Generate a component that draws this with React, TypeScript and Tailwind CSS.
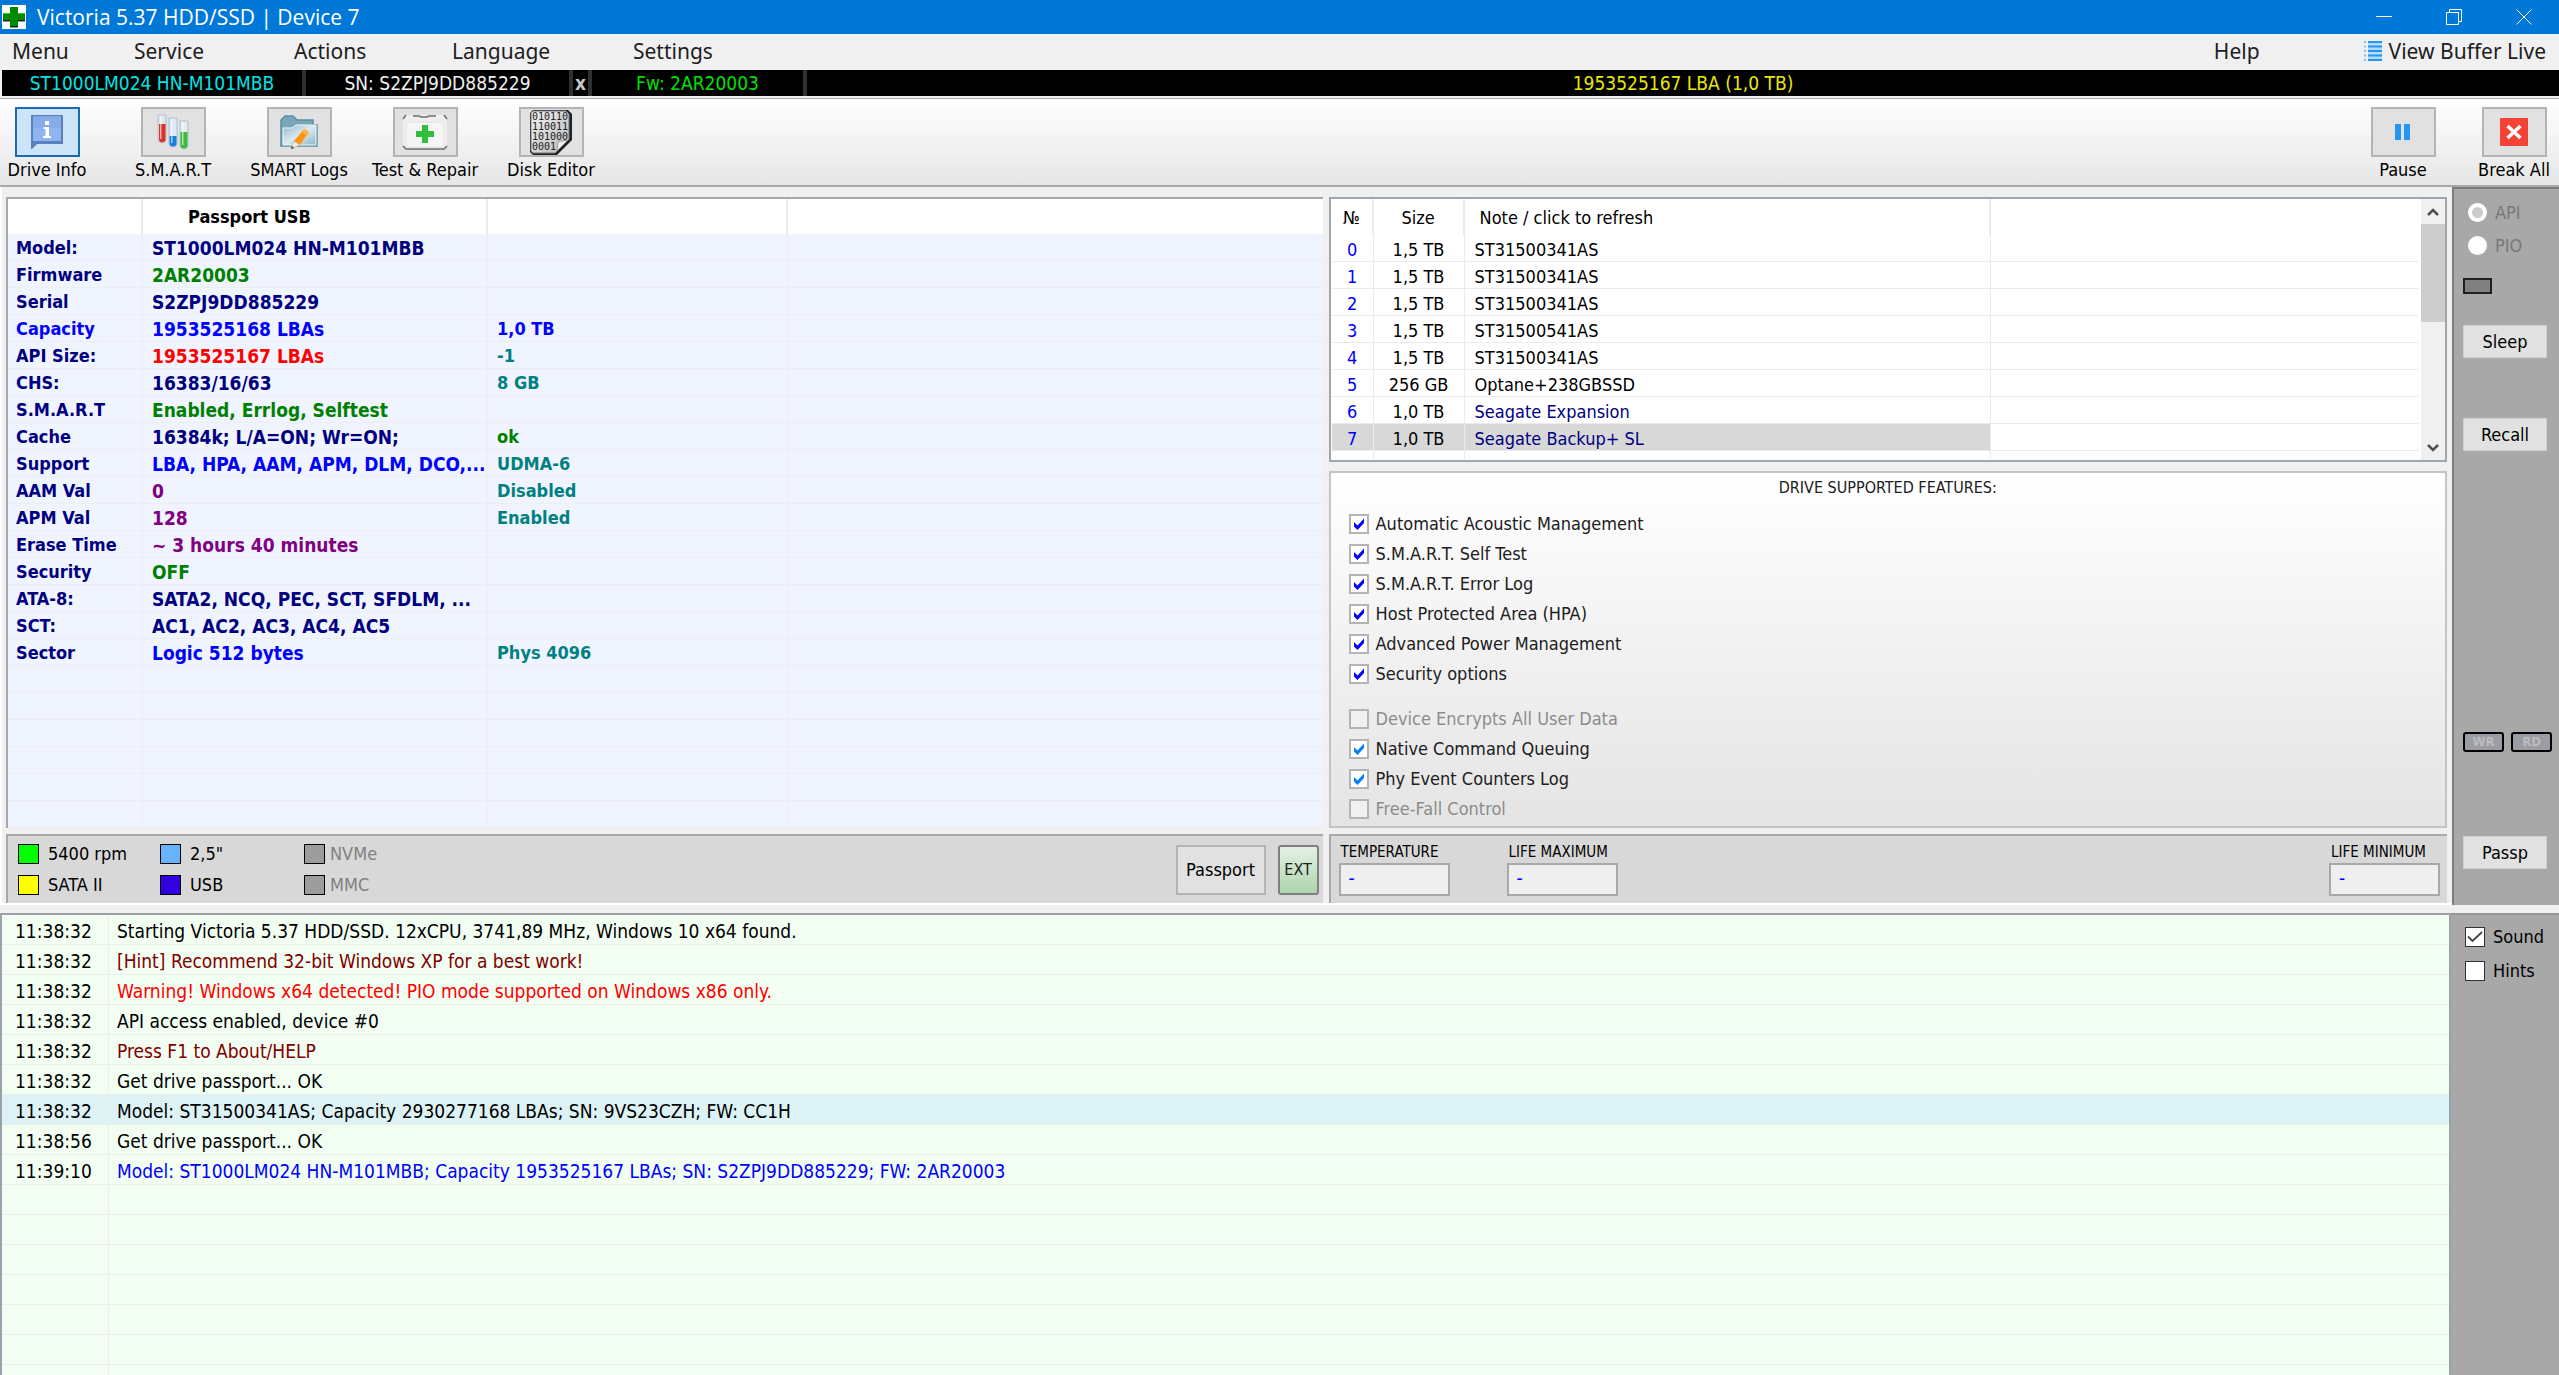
import { useState } from "react";
import type { ReactNode } from "react";

const passport = [
  ["Model:", "ST1000LM024 HN-M101MBB", "", "text-[#000080]", "text-[#000080]", ""],
  ["Firmware", "2AR20003", "", "text-[#000080]", "text-[#008000]", ""],
  ["Serial", "S2ZPJ9DD885229", "", "text-[#000080]", "text-[#000080]", ""],
  ["Capacity", "1953525168 LBAs", "1,0 TB", "text-[#0000ff]", "text-[#0000ff]", "text-[#0000ff]"],
  ["API Size:", "1953525167 LBAs", "-1", "text-[#000080]", "text-[#ff0000]", "text-[#008080]"],
  ["CHS:", "16383/16/63", "8 GB", "text-[#000080]", "text-[#000080]", "text-[#008080]"],
  ["S.M.A.R.T", "Enabled, Errlog, Selftest", "", "text-[#000080]", "text-[#008000]", ""],
  ["Cache", "16384k; L/A=ON; Wr=ON;", "ok", "text-[#000080]", "text-[#000080]", "text-[#008000]"],
  ["Support", "LBA, HPA, AAM, APM, DLM, DCO,...", "UDMA-6", "text-[#000080]", "text-[#0000ff]", "text-[#008080]"],
  ["AAM Val", "0", "Disabled", "text-[#000080]", "text-[#800080]", "text-[#008080]"],
  ["APM Val", "128", "Enabled", "text-[#000080]", "text-[#800080]", "text-[#008080]"],
  ["Erase Time", "~ 3 hours 40 minutes", "", "text-[#000080]", "text-[#800080]", ""],
  ["Security", "OFF", "", "text-[#000080]", "text-[#008000]", ""],
  ["ATA-8:", "SATA2, NCQ, PEC, SCT, SFDLM, ...", "", "text-[#000080]", "text-[#000080]", ""],
  ["SCT:", "AC1, AC2, AC3, AC4, AC5", "", "text-[#000080]", "text-[#000080]", ""],
  ["Sector", "Logic 512 bytes", "Phys 4096", "text-[#000080]", "text-[#0000ff]", "text-[#008080]"],
  ["", "", "", "", "", ""],
  ["", "", "", "", "", ""],
  ["", "", "", "", "", ""],
  ["", "", "", "", "", ""],
  ["", "", "", "", "", ""],
  ["", "", "", "", "", ""],
];

const drives = [
  { size: "1,5 TB", note: "ST31500341AS", color: "text-black" },
  { size: "1,5 TB", note: "ST31500341AS", color: "text-black" },
  { size: "1,5 TB", note: "ST31500341AS", color: "text-black" },
  { size: "1,5 TB", note: "ST31500541AS", color: "text-black" },
  { size: "1,5 TB", note: "ST31500341AS", color: "text-black" },
  { size: "256 GB", note: "Optane+238GBSSD", color: "text-black" },
  { size: "1,0 TB", note: "Seagate Expansion", color: "text-[#000080]" },
  { size: "1,0 TB", note: "Seagate Backup+ SL", color: "text-[#000080]" },
];

const features = [
  { label: "Automatic Acoustic Management", on: true, tick: "text-[#0000ff]" },
  { label: "S.M.A.R.T. Self Test", on: true, tick: "text-[#0000ff]" },
  { label: "S.M.A.R.T. Error Log", on: true, tick: "text-[#0000ff]" },
  { label: "Host Protected Area (HPA)", on: true, tick: "text-[#0000ff]" },
  { label: "Advanced Power Management", on: true, tick: "text-[#0000ff]" },
  { label: "Security options", on: true, tick: "text-[#0000ff]" },
];

const extraFeatures = [
  { label: "Device Encrypts All User Data", on: false, tick: "" },
  { label: "Native Command Queuing", on: true, tick: "text-[#0080ff]" },
  { label: "Phy Event Counters Log", on: true, tick: "text-[#0080ff]" },
  { label: "Free-Fall Control", on: false, tick: "" },
];

const log = [
  { time: "11:38:32", text: "Starting Victoria 5.37 HDD/SSD. 12xCPU, 3741,89 MHz, Windows 10 x64 found.", color: "text-black" },
  { time: "11:38:32", text: "[Hint] Recommend 32-bit Windows XP for a best work!", color: "text-[#800000]" },
  { time: "11:38:32", text: "Warning! Windows x64 detected! PIO mode supported on Windows x86 only.", color: "text-[#ff0000]" },
  { time: "11:38:32", text: "API access enabled, device #0", color: "text-black" },
  { time: "11:38:32", text: "Press F1 to About/HELP", color: "text-[#800000]" },
  { time: "11:38:32", text: "Get drive passport... OK", color: "text-black" },
  { time: "11:38:32", text: "Model: ST31500341AS; Capacity 2930277168 LBAs; SN: 9VS23CZH; FW: CC1H", color: "text-black" },
  { time: "11:38:56", text: "Get drive passport... OK", color: "text-black" },
  { time: "11:39:10", text: "Model: ST1000LM024 HN-M101MBB; Capacity 1953525167 LBAs; SN: S2ZPJ9DD885229; FW: 2AR20003", color: "text-[#0000ff]" },
  { time: "", text: "", color: "" },
  { time: "", text: "", color: "" },
  { time: "", text: "", color: "" },
  { time: "", text: "", color: "" },
  { time: "", text: "", color: "" },
  { time: "", text: "", color: "" },
  { time: "", text: "", color: "" },
];

const legend = [
  { label: "5400 rpm", box: "bg-[#00ff00]", text: "ml-[9px] text-black" },
  { label: '2,5"', box: "bg-[#66b3ff]", text: "ml-[9px] text-black" },
  { label: "NVMe", box: "bg-[#9c9c9c]", text: "ml-[5px] text-[#808080]" },
  { label: "SATA II", box: "bg-[#ffff00]", text: "ml-[9px] text-black" },
  { label: "USB", box: "bg-[#3300e0]", text: "ml-[9px] text-black" },
  { label: "MMC", box: "bg-[#9c9c9c]", text: "ml-[5px] text-[#808080]" },
];

function InfoIcon() {
  return (
    <svg width="34" height="36" viewBox="0 0 34 36">
      <path d="M1 1H33V30H7L2 35H1Z" fill="#5b80c0" />
      <path d="M3 2.5H31V27H3Z" fill="#8fb4ee" />
      <path d="M3 2.5H31V14H3Z" fill="#86acea" />
      <path d="M15 7H19V11H15ZM13.500 13H19V22H21V24H13V22H15.500V15H13.500Z" fill="#fff" />
    </svg>
  );
}

function TubesIcon() {
  return (
    <svg width="34" height="38" viewBox="0 0 34 38">
      <path d="M2 2H10V26A4 4 0 0 1 2 26Z" fill="#dde5ee" stroke="#b4bdcc" />
      <path d="M3 11H9.500V26A3 3 0 0 1 3 26Z" fill="#dc2f28" />
      <path d="M4 3H5.500V26H4Z" fill="#fff" opacity=".6" />
      <path d="M13 5H21V30A4 4 0 0 1 13 30Z" fill="#dde9f7" stroke="#a9bfdc" />
      <path d="M13.500 23H20.500V30A3.500 3.500 0 0 1 13.500 30Z" fill="#1b7fdc" />
      <path d="M15 6H16.500V30H15Z" fill="#fff" opacity=".6" />
      <path d="M24 8H32V32A4 4 0 0 1 24 32Z" fill="#e2ebee" stroke="#b0bfca" />
      <path d="M24.500 19H31.500V32A3.500 3.500 0 0 1 24.500 32Z" fill="#3bbb3b" />
      <path d="M26 9H27.500V32H26Z" fill="#fff" opacity=".6" />
    </svg>
  );
}

function FolderIcon() {
  return (
    <svg width="40" height="38" viewBox="0 0 40 38">
      <defs>
        <linearGradient id="folder" x1="0" y1="0" x2="1" y2="1">
          <stop offset="0" stopColor="#8fb9c6" />
          <stop offset="0.500" stopColor="#dcebef" />
          <stop offset="1" stopColor="#8ab4c2" />
        </linearGradient>
      </defs>
      <path d="M2 33V7L6 3H14L18 7H34V12H38V33Z" fill="#79a7b7" stroke="#5a8fa3" strokeWidth="1.500" />
      <path d="M4 32V15H13L17 12H37V32Z" fill="url(#folder)" stroke="#f0f8fa" />
      <path d="M24 17L29 20L21 32L15 28Z" fill="#ff9412" />
      <path d="M23 19L25 16Q29 16 30 20L28 23Z" fill="#ffb14d" />
      <path d="M15 28L21 32L12 36Z" fill="#f6ead8" stroke="#a89a86" strokeWidth=".5" />
      <path d="M12 36L13 33L15 35Z" fill="#444" />
    </svg>
  );
}

function RepairIcon() {
  return (
    <svg width="46" height="38" viewBox="0 0 46 38">
      <rect x="1" y="2" width="44" height="34" rx="4" fill="#efefef" />
      <rect x="4" y="9" width="38" height="25" rx="3" fill="#f5f5f5" stroke="#e2e2e2" />
      <path
        d="M1 6L4 2M45 6L42 2M11 3H17L19 4H25L27 3H34M1 33L4 36H42L45 33"
        fill="none"
        stroke="#6d6d6d"
        strokeWidth="1.500"
      />
      <path d="M20 12H26V18H32V24H26V30H20V24H14V18H20Z" fill="#2fbf3c" />
    </svg>
  );
}

function BinaryIcon() {
  return (
    <svg width="46" height="47" viewBox="0 0 46 47">
      <defs>
        <linearGradient id="paper" x1="0" y1="0" x2="1" y2="1">
          <stop offset="0" stopColor="#f2f2f2" />
          <stop offset="1" stopColor="#b8b8b8" />
        </linearGradient>
      </defs>
      <path d="M5 1H40L44 5V31L29 46H5L2 43V4Z" fill="#222" />
      <path d="M5 2H38L41 5V30L27 44H5L3 42V4Z" fill="url(#paper)" stroke="#6f7984" />
      <path d="M27 44C31 40 29 36 30 33C33 31 38 33 41 30Z" fill="#eee" stroke="#999" />
      <g fontFamily="'DejaVu Sans Mono', monospace" fontSize="10" fill="#222">
        <text x="4" y="11">010110</text>
        <text x="4" y="21">110011</text>
        <text x="4" y="31">101000</text>
        <text x="4" y="41">0001</text>
      </g>
    </svg>
  );
}

function PauseIcon() {
  return (
    <svg width="16" height="16" viewBox="0 0 16 16">
      <path d="M0 0H6V16H0ZM9 0H15V16H9Z" fill="#2196f3" />
    </svg>
  );
}

function BreakIcon() {
  return (
    <svg width="28" height="28" viewBox="0 0 28 28">
      <rect width="28" height="28" fill="#f44336" />
      <path d="M7.500 8L20.500 20M20.500 8L7.500 20" stroke="#fff" strokeWidth="3.500" />
    </svg>
  );
}

const tools = [
  { label: "Drive Info", icon: <InfoIcon />, style: "border-[#1a6ab0] bg-[#cce4f7]" },
  { label: "S.M.A.R.T", icon: <TubesIcon />, style: "border-[#b4b4b4] bg-[#e1e1e1]" },
  { label: "SMART Logs", icon: <FolderIcon />, style: "border-[#b4b4b4] bg-[#e1e1e1]" },
  { label: "Test & Repair", icon: <RepairIcon />, style: "border-[#b4b4b4] bg-[#e1e1e1]" },
  { label: "Disk Editor", icon: <BinaryIcon />, style: "border-[#b4b4b4] bg-[#e1e1e1]" },
];

function Feature({ label, on, tick }: { label: string; on: boolean; tick: string }) {
  const [checked, setChecked] = useState(on);
  return (
    <label className={`flex h-[30px] items-center gap-[7px] ${on ? "text-[#202020]" : "text-[#8c8c8c]"}`}>
      <span className="relative flex">
        <input
          type="checkbox"
          checked={checked}
          disabled={!on}
          onChange={() => setChecked(!checked)}
          className="h-5 w-5 appearance-none border-2 border-[#b4b4b4] bg-white disabled:bg-[#f0f0f0]"
        />
        {checked && (
          <svg className={`pointer-events-none absolute inset-0 ${tick}`} width="20" height="20" viewBox="0 0 20 20">
            <path d="M5 8L8.500 11.500L15 4.500V9L8.500 16L5 12.500Z" fill="currentColor" />
          </svg>
        )}
      </span>
      {label}
    </label>
  );
}

function Option({ label, on }: { label: string; on: boolean }) {
  const [checked, setChecked] = useState(on);
  return (
    <label className="flex h-[34px] items-center gap-2">
      <span className="relative flex">
        <input
          type="checkbox"
          checked={checked}
          onChange={() => setChecked(!checked)}
          className="h-5 w-5 appearance-none border border-[#333] bg-white"
        />
        {checked && (
          <svg className="pointer-events-none absolute inset-0" width="20" height="20" viewBox="0 0 20 20">
            <path d="M3 9.500L7.500 14L17 5" fill="none" stroke="#444" strokeWidth="1.800" />
          </svg>
        )}
      </span>
      {label}
    </label>
  );
}

function Temperature({ label }: { label: string }) {
  return (
    <label className="flex w-[111px] flex-col text-[15px] leading-[18px] whitespace-nowrap">
      <span className="pl-[2px]">{label}</span>
      <input
        type="text"
        readOnly
        value="-"
        className="mt-[2px] h-[33px] w-full border-2 border-[#a8a8a8] bg-[#efefef] px-2 pb-1 text-[19px] text-[#0000ff] outline-none"
      />
    </label>
  );
}

function SideButton({ children, className }: { children: ReactNode; className: string }) {
  return (
    <button className={`h-[33px] w-[84px] border border-[#d0d0d0] bg-[#e1e1e1] leading-[30px] ${className}`}>
      {children}
    </button>
  );
}

export default function App() {
  const [selected, setSelected] = useState(7);

  return (
    <div className="flex h-screen flex-col overflow-hidden bg-[#f0f0f0] font-['DejaVu_Sans_Condensed','Noto_Sans',sans-serif] text-[18px] leading-[22px] text-black">
      {/* title bar */}
      <header className="flex h-[34px] shrink-0 items-center bg-[#0078d7] pl-[2px] font-['Open_Sans','Noto_Sans',sans-serif] text-white">
        <svg width="24" height="24" viewBox="0 0 24 24">
          <rect width="24" height="24" fill="#fff" />
          <path d="M8 2H16V8H23V16H16V22H8V16H1V8H8Z" fill="#008a00" />
          <path d="M8 21H16V22.500H8ZM16 15H23V16.500H16ZM1 15H8V16.500H1Z" fill="#222" />
          <path d="M1 8H8V9H1ZM16 8H23V9H16Z" fill="#1fd01f" />
        </svg>
        <h1 className="ml-[11px] flex-1 text-[21px]">Victoria 5.37 HDD/SSD | Device 7</h1>
        <button aria-label="Minimize" className="flex h-full w-[70px] items-center justify-center">
          <svg width="16" height="16" viewBox="0 0 16 16" stroke="#fff">
            <path d="M0 7.500H16" />
          </svg>
        </button>
        <button aria-label="Restore" className="flex h-full w-[70px] items-center justify-center">
          <svg width="16" height="16" viewBox="0 0 16 16" fill="none" stroke="#fff">
            <path d="M.5 3.500H12.500V15.500H.5ZM3.500 3.500V.5H15.500V12.500H12.500" />
          </svg>
        </button>
        <button aria-label="Close" className="flex h-full w-[70px] items-center justify-center">
          <svg width="16" height="16" viewBox="0 0 16 16" stroke="#fff">
            <path d="M.5 .5L15.500 15.500M15.500 .5L.5 15.500" />
          </svg>
        </button>
      </header>

      {/* menu */}
      <nav className="flex h-9 shrink-0 items-center pr-[13px] pb-[3px] pl-3 font-['Noto_Sans',sans-serif] text-[21px] text-[#202020]">
        <button className="w-[122px] text-left">Menu</button>
        <button className="w-[160px] text-left">Service</button>
        <button className="w-[158px] text-left">Actions</button>
        <button className="w-[181px] text-left">Language</button>
        <button className="text-left">Settings</button>
        <button className="mr-[104px] ml-auto">Help</button>
        <button className="flex items-center gap-[7px]">
          <svg width="18" height="20" viewBox="0 0 18 20">
            <path d="M0 0H2V2H0ZM0 4.500H2V6.500H0ZM0 9H2V11H0ZM0 13.500H2V15.500H0ZM0 18H2V20H0Z" fill="#7cc0f8" />
            <path d="M4 0H18V20H4Z" fill="#b5dcfa" />
            <path d="M4 0H18V2H4ZM4 4.500H18V6.500H4ZM4 9H18V11H4ZM4 13.500H18V15.500H4ZM4 18H18V20H4Z" fill="#2196f3" />
          </svg>
          View Buffer Live
        </button>
      </nav>

      {/* current drive */}
      <div className="ml-[2px] flex h-[26px] shrink-0 items-center bg-black text-center text-[19px]">
        <div className="h-full w-[304px] border-r-4 border-[#303030] leading-[26px] text-[#00e5e5]">
          ST1000LM024 HN-M101MBB
        </div>
        <div className="h-full w-[267px] border-r-4 border-[#303030] leading-[26px] text-[#f0f0f0]">SN: S2ZPJ9DD885229</div>
        <button className="h-full w-[19px] border-r-4 border-[#303030] leading-[24px] font-bold text-[#c8c8c8]">x</button>
        <div className="h-full w-[215px] border-r-4 border-[#303030] leading-[26px] text-[#00e000]">Fw: 2AR20003</div>
        <div className="flex-1 leading-[26px] text-[#e8e800]">1953525167 LBA (1,0 TB)</div>
      </div>

      {/* toolbar */}
      <div className="mt-[2px] flex h-[89px] shrink-0 justify-between border-t border-b-2 border-[#a8a8a8] bg-linear-to-b from-white to-[#e6e6e6] pt-2">
        <div className="flex gap-8">
          {tools.map((tool) => (
            <button key={tool.label} className="flex w-[94px] flex-col items-center whitespace-nowrap">
              <span className={`flex h-[50px] w-[65px] items-center justify-center overflow-hidden border-2 ${tool.style}`}>
                {tool.icon}
              </span>
              <span className="mt-[2px]">{tool.label}</span>
            </button>
          ))}
        </div>
        <div className="flex gap-[31px] pr-[5px]">
          <button className="flex w-20 flex-col items-center">
            <span className="flex h-[50px] w-[65px] items-center justify-center border-2 border-[#b4b4b4] bg-[#e1e1e1]">
              <PauseIcon />
            </span>
            <span className="mt-[2px]">Pause</span>
          </button>
          <button className="flex w-20 flex-col items-center whitespace-nowrap">
            <span className="flex h-[50px] w-[65px] items-center justify-center border-2 border-[#b4b4b4] bg-[#e1e1e1]">
              <BreakIcon />
            </span>
            <span className="mt-[2px]">Break All</span>
          </button>
        </div>
      </div>

      <div className="flex shrink-0">
        <main className="flex flex-1 gap-[6px] border-b-2 border-l-2 border-white pt-[10px] pr-[5px] pl-1">
          {/* passport */}
          <section className="flex min-w-0 flex-[1316] flex-col">
            <table className="w-full table-fixed border-separate border-spacing-0 border-t-2 border-l-2 border-[#a8a8a8] bg-[#f0f4ff] text-left font-bold">
              <colgroup>
                <col className="w-[135px]" />
                <col className="w-[345px]" />
                <col className="w-[300px]" />
                <col />
              </colgroup>
              <thead>
                <tr className="h-[35px] bg-white">
                  <th className="border-r-2 border-[#ebebeb] p-0" />
                  <th className="border-r-2 border-[#ebebeb] p-0 pl-[45px] font-bold">Passport USB</th>
                  <th className="border-r-2 border-[#ebebeb] p-0" />
                  <th className="p-0" />
                </tr>
              </thead>
              <tbody>
                {passport.map((row, i) => (
                  <tr key={i} className="h-[27px] whitespace-nowrap">
                    <td className={`border-r border-b border-[#eceff2] p-0 pt-[2px] pl-2 ${row[3]}`}>{row[0]}</td>
                    <td className={`border-r border-b border-[#eceff2] p-0 pt-[2px] pl-[9px] text-[19px] ${row[4]}`}>{row[1]}</td>
                    <td className={`border-r border-b border-[#eceff2] p-0 pt-[2px] pl-[9px] ${row[5]}`}>{row[2]}</td>
                    <td className="border-b border-[#eceff2] p-0" />
                  </tr>
                ))}
              </tbody>
            </table>
            <div className="mt-[6px] flex h-[69px] items-center border-t-2 border-l-2 border-[#a8a8a8] bg-[#d8d8d8] pr-1">
              <ul className="grid flex-1 grid-cols-[142px_144px_140px] gap-y-[9px] pl-[10px]">
                {legend.map((item) => (
                  <li key={item.label} className="flex items-center">
                    <span className={`h-5 w-[21px] border border-black ${item.box}`} />
                    <span className={item.text}>{item.label}</span>
                  </li>
                ))}
              </ul>
              <button className="h-[50px] w-[90px] border-2 border-[#b4b4b4] bg-[#e1e1e1]">Passport</button>
              <button className="ml-3 h-[50px] w-[41px] rounded-[3px] border-2 border-[#808080] bg-linear-to-b from-[#e4f0e4] to-[#aed4ae] text-[16px] text-[#202020]">
                EXT
              </button>
            </div>
          </section>

          <section className="flex min-w-0 flex-[1118] flex-col">
            {/* drive list */}
            <div className="flex h-[265px] border-2 border-[#a0a6ae] bg-white">
              <div className="min-w-0 flex-1 overflow-hidden pl-[1px]">
                <table className="w-full table-fixed border-separate border-spacing-0 text-center">
                  <colgroup>
                    <col className="w-[42px]" />
                    <col className="w-[91px]" />
                    <col className="w-[526px]" />
                    <col />
                  </colgroup>
                  <thead>
                    <tr className="h-9">
                      <th className="border-r-2 border-[#ebebeb] p-0 pt-[2px] font-normal">№</th>
                      <th className="border-r-2 border-[#ebebeb] p-0 pt-[2px] font-normal">Size</th>
                      <th className="border-r-2 border-[#ebebeb] p-0 pt-[2px] pl-[15px] text-left font-normal">
                        Note / click to refresh
                      </th>
                      <th className="p-0" />
                    </tr>
                  </thead>
                  <tbody>
                    {drives.map((drive, i) => (
                      <tr key={i} onClick={() => setSelected(i)} className="h-[27px]">
                        <td
                          className={`border-r border-b border-[#ebebeb] p-0 pt-1 text-[#0000ff] ${
                            selected === i ? "bg-[#d8d8d8]" : ""
                          }`}
                        >
                          {i}
                        </td>
                        <td className={`border-r border-b border-[#ebebeb] p-0 pt-1 ${selected === i ? "bg-[#d8d8d8]" : ""}`}>
                          {drive.size}
                        </td>
                        <td
                          className={`border-r border-b border-[#ebebeb] p-0 pt-1 pl-[10px] text-left ${drive.color} ${
                            selected === i ? "bg-[#d8d8d8]" : ""
                          }`}
                        >
                          {drive.note}
                        </td>
                        <td className="border-b border-[#ebebeb] p-0" />
                      </tr>
                    ))}
                    <tr className="h-2">
                      <td className="border-r border-[#ebebeb] p-0" />
                      <td className="border-r border-[#ebebeb] p-0" />
                      <td className="border-r border-[#ebebeb] p-0" />
                      <td className="p-0" />
                    </tr>
                  </tbody>
                </table>
              </div>
              <div className="ml-[2px] flex w-6 flex-col bg-[#f0f0f0]">
                <button aria-label="Scroll up" className="flex h-[25px] items-center justify-center">
                  <svg width="12" height="10" viewBox="0 0 12 10">
                    <path d="M1 8L6 3L11 8" fill="none" stroke="#505050" strokeWidth="2.500" />
                  </svg>
                </button>
                <div className="h-[98px] bg-[#cdcdcd]" />
                <button aria-label="Scroll down" className="mt-auto flex h-[25px] items-center justify-center">
                  <svg width="12" height="10" viewBox="0 0 12 10">
                    <path d="M1 2L6 7L11 2" fill="none" stroke="#505050" strokeWidth="2.500" />
                  </svg>
                </button>
              </div>
            </div>

            {/* features */}
            <div className="mt-[9px] flex-1 border-2 border-[#c4c4c4] bg-linear-to-b from-white to-[#e4e4e4]">
              <h2 className="h-9 pt-1 text-center text-[16px] text-[#202020]">DRIVE SUPPORTED FEATURES:</h2>
              <div className="pl-[18px]">
                {features.map((f) => (
                  <Feature key={f.label} {...f} />
                ))}
              </div>
              <div className="mt-[15px] pl-[18px]">
                {extraFeatures.map((f) => (
                  <Feature key={f.label} {...f} />
                ))}
              </div>
            </div>

            <div className="mt-[6px] flex h-[69px] border-t-2 border-l-2 border-[#a8a8a8] bg-[#d8d8d8] pt-[7px] pr-[7px] pl-2">
              <Temperature label="TEMPERATURE" />
              <div className="ml-[57px] flex-1">
                <Temperature label="LIFE MAXIMUM" />
              </div>
              <Temperature label="LIFE MINIMUM" />
            </div>
          </section>
        </main>

        {/* side panel */}
        <aside className="flex w-[107px] flex-col border-t-2 border-l-2 border-[#7c7c7c] bg-[#a8a8a8] pl-[9px]">
          <fieldset disabled className="pt-[7px] pl-[5px] text-[#787878]">
            <label className="flex h-[33px] items-center gap-2">
              <input
                type="radio"
                name="access"
                defaultChecked
                className="h-[19px] w-[19px] appearance-none rounded-full border-4 border-white bg-[#ccc]"
              />
              API
            </label>
            <label className="flex h-[33px] items-center gap-2">
              <input type="radio" name="access" className="h-[19px] w-[19px] appearance-none rounded-full bg-white" />
              PIO
            </label>
          </fieldset>
          <div className="mt-4 h-4 w-[29px] border-2 border-[#202020] bg-[#808080]" />
          <SideButton className="mt-[31px]">Sleep</SideButton>
          <SideButton className="mt-[60px]">Recall</SideButton>
          <div className="mt-auto mb-[84px] flex gap-[7px] text-[13px] leading-4 font-bold text-[#bcbcbc]">
            <button className="h-5 w-[41px] rounded-[3px] border-2 border-black bg-[#9c9ca4]">WR</button>
            <button className="h-5 w-[41px] rounded-[3px] border-2 border-black bg-[#9c9ca4]">RD</button>
          </div>
          <SideButton className="mb-9">Passp</SideButton>
        </aside>
      </div>

      {/* log */}
      <div className="mt-2 flex min-h-0 flex-1">
        <div className="flex-1 overflow-hidden border-t-2 border-r-2 border-l-2 border-[#9aa1a8] bg-[#f2fef2]">
          <table className="w-full table-fixed border-separate border-spacing-0 text-[19px]">
            <colgroup>
              <col className="w-[107px]" />
              <col />
            </colgroup>
            <tbody>
              {log.map((line, i) => (
                <tr key={i} className={`h-[30px] ${i === 6 ? "bg-[#dcf2f5]" : ""}`}>
                  <td className="border-r border-b border-[#eceeec] p-0 pt-[3px] pl-[13px]">{line.time}</td>
                  <td className={`border-b border-[#eceeec] p-0 pt-[3px] pl-2 ${line.color}`}>{line.text}</td>
                </tr>
              ))}
            </tbody>
          </table>
        </div>
        <div className="w-[108px] border-t-2 border-[#989898] bg-[#a8a8a8] pt-[5px] pl-[14px]">
          <Option label="Sound" on />
          <Option label="Hints" on={false} />
        </div>
      </div>
    </div>
  );
}
